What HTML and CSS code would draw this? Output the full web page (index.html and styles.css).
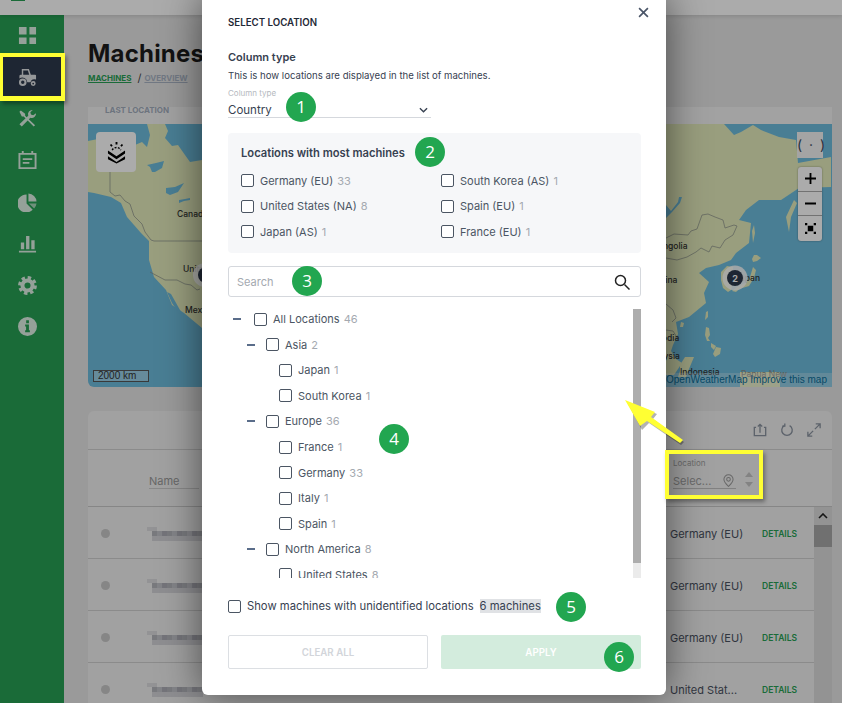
FILE: index.html
```html
<!DOCTYPE html>
<html lang="en">
<head>
<meta charset="utf-8">
<title>Machines</title>
<link rel="stylesheet" href="styles.css">
</head>
<body>
<div class="app">
  <header class="topbar"><span class="logo"></span></header>
  <div class="layout">
    <nav class="sidebar">
      <a class="nav-item"><svg class="nav-icon" viewBox="0 0 20 20"><path d="M1 1h8v8H1zM12 1h7v8h-7zM1 12h8v7H1zM12 12h7v7h-7z"/></svg></a>
      <a class="nav-item active"><svg class="nav-icon" viewBox="0 0 20 20"><path fill-rule="evenodd" d="M4 1h7.500l2 6H18a1 1 0 0 1 1 1v4.200a4 4 0 0 0-5.800 2.800H9.800A5.200 5.200 0 0 0 1.500 11V8.500A1.500 1.500 0 0 1 3 7h1zM5.500 2.500V7h6.300l-1.400-4.500zM5 11a4 4 0 1 1 0 8 4 4 0 0 1 0-8zm0 2.200a1.800 1.800 0 1 0 0 3.600 1.800 1.800 0 0 0 0-3.600zM16 13.800a2.600 2.600 0 1 1 0 5.200 2.600 2.600 0 0 1 0-5.200zm0 1.600a1 1 0 1 0 0 2 1 1 0 0 0 0-2z"/></svg></a>
      <a class="nav-item"><svg class="nav-icon" viewBox="0 0 20 20"><path d="M1.500 3 3 1.500l4.500 3.500v2l10.500 10-1.500 1.500L6 8H4z"/><path d="M19 4.500a4.500 4.500 0 0 1-6 4.700L4 18.500 1.500 16l9.300-9A4.500 4.500 0 0 1 15.500 1L13 3.500l.6 2.400 2.400.6z"/></svg></a>
      <a class="nav-item"><svg class="nav-icon" viewBox="0 0 20 20"><path fill-rule="evenodd" d="M4 0h2v2h8V0h2v2h3.500v17H.5V2H4zM2.500 4v13h15V4z"/><path d="M5 7.500h10v2H5zM5 11.500h7v2H5z"/></svg></a>
      <a class="nav-item"><svg class="nav-icon" viewBox="0 0 20 20"><path d="M9 1.500v9.500l6.500 6.700A9.500 9.500 0 1 1 9 1.500z"/><path d="M11 .5a9 9 0 0 1 8.500 8.500H11z"/><path d="M11.500 11h8a9.400 9.400 0 0 1-2.500 5.300z" opacity=".7"/></svg></a>
      <a class="nav-item"><svg class="nav-icon" viewBox="0 0 20 20"><path d="M3 9h3.500v7H3zM8.500 2H12v14H8.500zM14 6.500h3.500V16H14zM1 17.500h18v2H1z"/></svg></a>
      <a class="nav-item"><svg class="nav-icon" viewBox="0 0 20 20"><circle class="gear-ring" cx="10" cy="10" r="5.300"/><circle class="gear-teeth" cx="10" cy="10" r="8.200"/></svg></a>
      <a class="nav-item"><svg class="nav-icon" viewBox="0 0 20 20"><path fill-rule="evenodd" d="M10 0a10 10 0 1 1 0 20 10 10 0 0 1 0-20zM8.600 3.500v3h2.900v-3zM7.500 8v2h1v4h-1v2h5v-2h-1V8z"/></svg></a>
    </nav>
    <main class="main">
      <h1 class="title">Machines</h1>
      <div class="crumbs"><a class="crumb-current">MACHINES</a><span class="crumb-sep">/</span><a class="crumb-link">OVERVIEW</a></div>
      <section class="map-card">
        <div class="map-head">LAST LOCATION</div>
        <div class="map">
          <svg class="map-svg" viewBox="88 124 744 263">
            <rect class="water" x="88" y="124" width="744" height="263"/>
            <path class="land" d="M88 141l20-4 27 8 7-3 5 5 3-12-3-11h18l3 7-3 7 7 8 6-1 7 10 5 7 12-2V328l-18-15-12-8-6-15-12-13-5-17v-20l2 3-10-10-14-16-6-14-10-6-17-4-6-1z"/>
            <path class="water" d="M147 165l9-2 8-2-2 7-7 4-3 0-2-5zM166 188l9-1 9-4-6 9-8 3-4-2zM179 200l6-1 5-1 0 2-6 1-5 2zM167 292l4 2 9 16 3 5-3 0-8-12z"/>
            <path class="border" d="M110 145v47l5 4 5-1 5 6 5 3 4 12 8 8 3 8 6 8 3 1h50M150 272l15 8 12 0 8 4 6 1 6 5 3-1"/>
            <path class="land" d="M666 124h58l10 11 7-3 12-7 8 5 18 7 17 3 2 23 33-6v30l-32 1-18 12h-22l-13 10-7 10 12 3-2 20-13 10-5 7-12 5-13 3-7 5 10 9-5 11 2 10-17 14-13 5 2 12-5 11-2 6 5 8 6 4-8 12H666z"/>
            <path class="land" d="M721 272l6-6 6 1v15l-2 8-3 2-5-4-2-8zM794 200l3 3-6 14-2 15-3-15zM754 225l1 8-2 10-1-12zM754 255l3 0 4 3-4 3-4 1-1-3zM753 267l3 3-2 8-5 8-10 3-3 3-4-1 5-4 8-4 5-6z"/>
            <path class="land" d="M706 312l2-1 0 6-3 3zM706 327l3 1 1 7-2 3 2 3-3 0-2-6zM711 343l5 3-2 4-3-3zM716 347l5 1-1 6-5 3-2-3zM694 357l-9 0-5 8 0 6-2 6 8 0 3-8zM681 322l3 1-1 4-3 0zM740 372l40 0 0 15-40 0z"/>
            <path class="water" d="M666 205l5 6 7-9 1-5 3 0-2 6-8 9-6 6z"/>
            <path class="border" d="M666 238l8-4 14 1 3-4 6-2 5-14 6-1 7 3 8 3 2 8 9-3 3 1-4 9-8 5-5 8-8-2-3 6-8-4-5 4-9 5-10 3-11-2M666 304l7 6 3 8-4 4M666 330l7 1 5 8"/>
            <text class="map-label" x="177" y="217">Canada</text>
            <text class="map-label" x="183" y="272">United</text>
            <text class="map-label" x="185" y="313">Mexico</text>
            <text class="map-label" x="650" y="249">Mongolia</text>
            <text class="map-label" x="654" y="283">China</text>
            <text class="map-label" x="735" y="281">Japan</text>
            <text class="map-label" x="638" y="341">Cambodia</text>
            <text class="map-label" x="644" y="359">Malaysia</text>
            <text class="map-label" x="680" y="375">Indonesia</text>
            <text class="map-label faint" x="741" y="377">Papua New</text>
            <circle class="marker-halo" cx="205" cy="275" r="12"/>
            <circle class="marker-core" cx="206" cy="275" r="8"/>
            <circle class="marker-halo" cx="735" cy="278" r="12.500"/>
            <circle class="marker-core" cx="735" cy="278" r="8"/>
            <text class="marker-num" x="735" y="281.500">2</text>
          </svg>
          <button class="layers-btn"><svg class="layers-icon" viewBox="0 0 20 24"><path d="M1 10l9 6 9-6v3l-9 6-9-6zM1 16l9 6 9-6v3l-9 4.500L1 19z"/><path class="layers-arc" d="M5.500 9.500A5 5 0 0 1 14.500 9.500"/><path d="M9 1h2v2.500H9zM3 4l1.500-1 1.500 2-1.500 1zM17 4l-1.500-1L14 5l1.500 1z"/></svg></button>
          <div class="locate">( · )</div>
          <div class="zoom-ctl">
            <button class="zoom-btn"><svg class="zoom-icon" viewBox="0 0 12 12"><path d="M5 0h2v5h5v2H7v5H5V7H0V5h5z"/></svg></button>
            <button class="zoom-btn"><svg class="zoom-icon" viewBox="0 0 12 12"><path d="M0 5h12v2H0z"/></svg></button>
            <button class="zoom-btn"><svg class="zoom-icon" viewBox="0 0 12 12"><path d="M3 3h6v6H3zM0 0h2.500v2.500H0zM9.500 0H12v2.500H9.500zM0 9.500h2.500V12H0zM9.500 9.500H12V12H9.500z"/></svg></button>
          </div>
          <div class="scale">2000 km</div>
          <div class="attrib">© OpenWeatherMap Improve this map</div>
        </div>
      </section>
      <section class="table-card">
        <div class="table-tools">
          <svg class="tool" viewBox="0 0 16 16"><path d="M3.500 5H1.500v9.500h13V5h-2M8 11V1.500M5.500 4 8 1.500 10.500 4"/></svg>
          <svg class="tool" viewBox="0 0 16 16"><path d="M5 3a6 6 0 1 0 6 0"/><path d="M5.500 .5V3.500H2.500"/></svg>
          <svg class="tool" viewBox="0 0 16 16"><path d="M9 7l6-6M10 1h5v5M7 9l-6 6M1 10v5h5"/></svg>
        </div>
        <div class="table-head">
          <div class="th-name">Name</div>
          <div class="th-loc">
            <span class="th-loc-label">Location</span>
            <div class="th-loc-field"><span class="th-loc-value">Selec...</span>
              <svg class="pin" viewBox="0 0 12 14"><path d="M6 .7a5 5 0 0 1 5 5c0 3.300-3 5.800-5 7.600-2-1.800-5-4.300-5-7.600a5 5 0 0 1 5-5z"/><circle cx="6" cy="5.700" r="2"/></svg>
            </div>
          </div>
          <div class="sort"><span class="sort-up"></span><span class="sort-down"></span></div>
        </div>
        <div class="tbody">
          <div class="rows">
            <div class="row"><span class="dot"></span><span class="blur"></span><span class="cell-loc">Germany (EU)</span><a class="details">DETAILS</a></div>
            <div class="row"><span class="dot"></span><span class="blur"></span><span class="cell-loc">Germany (EU)</span><a class="details">DETAILS</a></div>
            <div class="row"><span class="dot"></span><span class="blur"></span><span class="cell-loc">Germany (EU)</span><a class="details">DETAILS</a></div>
            <div class="row"><span class="dot"></span><span class="blur"></span><span class="cell-loc">United Stat...</span><a class="details">DETAILS</a></div>
          </div>
          <div class="vscroll"><svg class="vscroll-up" viewBox="0 0 10 6"><path d="M1 5l4-4 4 4"/></svg><span class="vscroll-thumb"></span></div>
        </div>
      </section>
    </main>
  </div>
  <div class="overlay"></div>

  <div class="modal">
    <button class="close"><svg viewBox="0 0 10 10"><path d="M1 1l8 8M9 1l-8 8"/></svg></button>
    <h2 class="modal-title">SELECT LOCATION</h2>
    <h3 class="section-title">Column type</h3>
    <p class="section-desc">This is how locations are displayed in the list of machines.</p>
    <div class="select">
      <span class="select-label">Column type</span>
      <div class="select-field"><span>Country</span><svg class="chev" viewBox="0 0 10 6"><path d="M1 1l4 4 4-4"/></svg></div>
    </div>
    <div class="top-box">
      <div class="top-title">Locations with most machines</div>
      <div class="top-grid">
        <label class="chk"><span class="box"></span>Germany (EU) <em>33</em></label>
        <label class="chk"><span class="box"></span>South Korea (AS) <em>1</em></label>
        <label class="chk"><span class="box"></span>United States (NA) <em>8</em></label>
        <label class="chk"><span class="box"></span>Spain (EU) <em>1</em></label>
        <label class="chk"><span class="box"></span>Japan (AS) <em>1</em></label>
        <label class="chk"><span class="box"></span>France (EU) <em>1</em></label>
      </div>
    </div>
    <div class="search"><span>Search</span><svg class="search-icon" viewBox="0 0 16 16"><circle cx="6.500" cy="6.500" r="5"/><path d="M10.500 10.500l5 5"/></svg></div>
    <div class="tree-wrap">
      <div class="tree">
        <div class="node l0"><i class="minus"></i><span class="box"></span>All Locations <em>46</em></div>
        <div class="node l1"><i class="minus"></i><span class="box"></span>Asia <em>2</em></div>
        <div class="node l2"><span class="box"></span>Japan <em>1</em></div>
        <div class="node l2"><span class="box"></span>South Korea <em>1</em></div>
        <div class="node l1"><i class="minus"></i><span class="box"></span>Europe <em>36</em></div>
        <div class="node l2"><span class="box"></span>France <em>1</em></div>
        <div class="node l2"><span class="box"></span>Germany <em>33</em></div>
        <div class="node l2"><span class="box"></span>Italy <em>1</em></div>
        <div class="node l2"><span class="box"></span>Spain <em>1</em></div>
        <div class="node l1"><i class="minus"></i><span class="box"></span>North America <em>8</em></div>
        <div class="node l2"><span class="box"></span>United States <em>8</em></div>
      </div>
      <div class="tree-scroll"><span class="tree-thumb"></span></div>
    </div>
    <div class="unident"><span class="box"></span>Show machines with unidentified locations<span class="chip">6 machines</span></div>
    <div class="actions">
      <button class="btn btn-clear">CLEAR ALL</button>
      <button class="btn btn-apply">APPLY</button>
    </div>
  </div>

  <div class="hl hl-nav"></div>
  <div class="hl hl-loc"></div>
  <svg class="arrow" viewBox="0 0 60 48"><path class="arrow-shadow" d="M2 2l30 12-4 5 31 23-3 3-32-22-7 7z"/><path class="arrow-fill" d="M0 0l30 12-4 5 32 23-3 3-33-22-7 5z"/></svg>
  <span class="badge b1">1</span>
  <span class="badge b2">2</span>
  <span class="badge b3">3</span>
  <span class="badge b4">4</span>
  <span class="badge b5">5</span>
  <span class="badge b6">6</span>
</div>
</body>
</html>
```
FILE: styles.css
```css
* { box-sizing: border-box; }
html, body { margin: 0; padding: 0; }
body { font-family: Inter, "Liberation Sans", sans-serif; color: #1f2937; background: #e6e6e6; }
button { font-family: inherit; border: 0; padding: 0; background: none; }
em { font-style: normal; color: #a4a9b0; }
.app { position: relative; width: 842px; height: 703px; overflow: hidden; }

.topbar { height: 15px; background: #fff; position: relative; box-shadow: 0 1px 4px rgba(0,0,0,.15); z-index: 1; }
.logo { display: block; position: absolute; left: 11px; top: -13px; width: 14px; height: 14px; background: #27a054; }
.layout { display: flex; height: 688px; }
.sidebar { width: 64px; flex: none; background: #27a054; display: flex; flex-direction: column; }
.nav-item { height: 41.6px; flex: none; display: flex; align-items: center; padding-left: 18px; }
.nav-item.active { background: #2e3a4c; }
.nav-icon { width: 19px; height: 19px; fill: #fff; opacity: .85; }
.gear-ring { fill: none; stroke: #fff; stroke-width: 4.200; }
.gear-teeth { fill: none; stroke: #fff; stroke-width: 3.400; stroke-dasharray: 3.600 2.830; }

.main { flex: 1; padding: 24px 10px 0 24px; min-width: 0; }
.title { margin: 0; font-size: 24px; line-height: 30px; font-weight: 700; color: #1c1c1c; letter-spacing: .2px; }
.crumbs { display: flex; align-items: center; height: 18px; margin-top: 0; font-size: 8px; font-weight: 700; }
.crumb-current { color: #27a054; text-decoration: underline; }
.crumb-sep { margin: 0 3px 0 6px; font-size: 11px; font-weight: 400; color: #444; }
.crumb-link { color: #a9b4c4; text-decoration: underline; }

.map-card { margin-top: 20px; }
.map-head { height: 17px; background: #f2f2f2; padding-left: 17px; font-size: 8px; line-height: 7px; font-weight: 700; color: #a3adbd; }
.map { position: relative; height: 263px; border-radius: 0 0 0 6px; overflow: hidden; }
.map-svg { display: block; width: 744px; height: 263px; }
.water { fill: #6ebcdd; }
.land { fill: #e4ecbc; }
.border { fill: none; stroke: #8a8f8a; stroke-width: .7; }
.marker-halo { fill: #fff; fill-opacity: .85; }
.marker-core { fill: #2e3a4c; }
.marker-num { fill: #fff; font-size: 9px; font-weight: 700; text-anchor: middle; }
.map-label { fill: #333; font-size: 8.500px; font-weight: 500; }
.map-label.faint { fill: #8a8f8a; }
.layers-btn { position: absolute; left: 8px; top: 8px; width: 40px; height: 40px; background: #fff; border-radius: 4px; display: flex; align-items: center; justify-content: center; }
.layers-icon { width: 19px; height: 23px; fill: #000; }
.layers-arc { fill: none; stroke: #000; stroke-width: 1.500; stroke-dasharray: 2 1.500; }
.locate { position: absolute; left: 709px; top: 8px; width: 26px; height: 26px; background: #f5f5f5; font-size: 14px; line-height: 25px; letter-spacing: 1.500px; text-align: center; color: #3c4c5c; white-space: nowrap; }
.zoom-ctl { position: absolute; left: 710px; top: 43px; width: 24px; background: #fff; border-radius: 3px; display: flex; flex-direction: column; box-shadow: 0 0 2px rgba(0,0,0,.4); }
.zoom-btn { height: 24.700px; display: flex; align-items: center; justify-content: center; border-bottom: 1px solid #aaa; }
.zoom-btn:last-child { border-bottom: 0; }
.zoom-icon { width: 11px; height: 11px; fill: #000; }
.scale { position: absolute; left: 5px; bottom: 5px; width: 56px; height: 12px; border: 1px solid #555; border-top-width: 1px; background: rgba(255,255,255,.3); font-size: 10px; line-height: 10px; padding-left: 4px; color: #333; font-family: "Liberation Sans", sans-serif; }
.attrib { position: absolute; right: 0; bottom: 0; height: 14px; padding: 0 5px 0 8px; background: rgba(255,255,255,.25); font-size: 10px; line-height: 14px; color: #0a6d9a; font-family: "Liberation Sans", sans-serif; white-space: nowrap; }

.table-card { margin-top: 24px; background: #f0f0f0; border-radius: 6px 6px 0 0; height: 292px; }
.table-tools { height: 39px; border-bottom: 1px solid #d0d0d0; display: flex; justify-content: flex-end; align-items: center; gap: 13px; padding-right: 11px; }
.tool { width: 14px; height: 14px; fill: none; stroke: #8a93a0; stroke-width: 1.500; }
.table-head { height: 57px; border-bottom: 1px solid #c8c8c8; display: flex; align-items: flex-end; padding: 0 0 17px 61px; }
.th-name { width: 50px; font-size: 11px; line-height: 14px; color: #9a9a9a; border-bottom: 1px solid #ccc; }
.th-loc { margin-left: 474px; width: 63px; display: flex; flex-direction: column; }
.th-loc-label { font-size: 8px; line-height: 10px; color: #a0a0a0; }
.th-loc-field { height: 21px; display: flex; align-items: flex-end; justify-content: space-between; border-bottom: 1px solid #c0c0c0; font-size: 11px; line-height: 14px; color: #a0a0a0; }
.pin { width: 11px; height: 13px; fill: none; stroke: #9a9a9a; stroke-width: 1.100; margin: 0 2px 1px 0; }
.sort { margin-left: 9px; display: flex; flex-direction: column; gap: 5px; padding-bottom: 2px; }
.sort-up { width: 0; height: 0; border: 4px solid transparent; border-top: 0; border-bottom: 5px solid #c4c4c4; }
.sort-down { width: 0; height: 0; border: 4px solid transparent; border-bottom: 0; border-top: 5px solid #c4c4c4; }
.tbody { display: flex; height: 196px; }
.rows { flex: 1; min-width: 0; }
.row { height: 52px; display: flex; align-items: center; padding: 2px 0 0 13px; border-bottom: 1px solid #d0d0d0; }
.dot { width: 9px; height: 9px; border-radius: 50%; background: #c8c8c8; flex: none; }
.blur { width: 56px; height: 14px; margin-left: 37px; flex: none; background:
  repeating-linear-gradient(90deg, #b5b6bd 0 5px, #c4c5cb 5px 10px, #adaeb6 10px 15px) 5px 4px / 51px 5px no-repeat,
  linear-gradient(#dcdcde, #dcdcde) 0 0 / 10px 4px no-repeat,
  linear-gradient(#d4d4d8, #d4d4d8) 5px 9px / 51px 5px no-repeat; }
.cell-loc { margin-left: 467px; width: 92px; flex: none; font-size: 11px; color: #4a5160; white-space: nowrap; }
.details { font-size: 8.500px; font-weight: 600; color: #27a054; }
.vscroll { width: 18px; flex: none; background: #dcdcdc; display: flex; flex-direction: column; align-items: center; padding-top: 6px; }
.vscroll-up { width: 10px; height: 6px; fill: none; stroke: #222; stroke-width: 1.600; }
.vscroll-thumb { width: 18px; height: 22px; margin-top: 6px; background: #a8a8a8; }

.overlay { position: absolute; inset: 0; background: rgba(0,0,0,.33); z-index: 2; }

.modal { position: absolute; z-index: 3; left: 202px; top: -5px; width: 464px; height: 700px; background: #fff; border-radius: 6px; box-shadow: 0 0 40px rgba(0,0,0,.55); padding: 22px 25px 0 26px; display: flex; flex-direction: column; }
.close { position: absolute; right: 17px; top: 12px; width: 11px; height: 11px; }
.close svg { display: block; width: 11px; height: 11px; fill: none; stroke: #4a5568; stroke-width: 1.500; }
.modal-title { margin: 0; font-size: 9.700px; line-height: 12px; font-weight: 600; color: #1f2937; }
.section-title { margin: 21px 0 0; font-size: 11px; line-height: 14px; font-weight: 600; color: #374151; }
.section-desc { margin: 5px 0 0; font-size: 9.600px; line-height: 14px; color: #374151; }
.select { width: 203px; margin-top: 5px; }
.select-label { display: block; font-size: 8px; line-height: 10px; color: #b5b9c0; }
.select-field { height: 20px; display: flex; align-items: flex-end; justify-content: space-between; border-bottom: 1px solid #d5d8dd; font-size: 11.500px; line-height: 14px; color: #374151; padding-right: 3px; }
.chev { width: 9px; height: 6px; fill: none; stroke: #374151; stroke-width: 1.500; margin-bottom: 4px; }
.top-box { margin-top: 15px; height: 120px; background: #f6f7f9; border-radius: 4px; padding: 13px; }
.top-title { font-size: 11.200px; line-height: 14px; font-weight: 600; color: #374151; }
.top-grid { margin-top: 8px; display: grid; grid-template-columns: 200px 1fr; grid-auto-rows: 25.500px; }
.chk { display: flex; align-items: center; font-size: 11px; color: #4b5563; white-space: pre; }
.box { width: 13px; height: 13px; flex: none; border: 1px solid #4b5563; border-radius: 2px; background: #fff; margin-right: 6px; }
.chk em { margin-left: 1px; }
.search { margin-top: 13px; height: 31px; border: 1px solid #d5d8dd; border-radius: 3px; display: flex; align-items: center; justify-content: space-between; padding: 0 10px 0 8px; font-size: 11px; color: #a4a9b0; }
.search-icon { width: 16px; height: 16px; fill: none; stroke: #222; stroke-width: 1.500; }
.tree-wrap { margin-top: 12px; height: 269px; display: flex; overflow: hidden; }
.tree { flex: 1; min-width: 0; margin-top: -2.500px; }
.node { height: 25.550px; display: flex; align-items: center; font-size: 11px; color: #4b5563; white-space: pre; }
.node em { margin-left: 1px; }
.node.l0 { padding-left: 5px; }
.node.l1 { padding-left: 19px; }
.node.l2 { padding-left: 51px; }
.minus { display: block; width: 8px; height: 2px; background: #5a6d8a; margin-right: 13px; flex: none; }
.node.l1 .minus { margin-right: 11px; }
.tree-scroll { width: 8px; flex: none; background: #ebebeb; }
.tree-thumb { display: block; height: 254px; background: #adadad; }
.unident { margin-top: 21px; display: flex; align-items: center; height: 14px; font-size: 11.250px; color: #374151; white-space: nowrap; }
.chip { margin-left: 6px; height: 14px; line-height: 14px; background: #e0e2e5; }
.actions { margin-top: 22px; display: grid; grid-template-columns: 200px 200px; column-gap: 13px; }
.btn { height: 34px; font-size: 9.700px; font-weight: 600; border-radius: 2px; }
.btn-clear { background: #fff; border: 1px solid #dcdfe3; color: #d2d5da; }
.btn-apply { background: #d3ecdd; color: #fff; }

.hl { position: absolute; z-index: 4; border: 4px solid #ffff33; box-shadow: 2px 3px 4px rgba(0,0,0,.35); }
.hl-nav { left: 0; top: 53px; width: 65px; height: 48px; border-width: 4px 4px 5px 3px; }
.hl-loc { left: 665px; top: 450px; width: 98px; height: 49px; }
.arrow { position: absolute; z-index: 4; left: 625px; top: 400px; width: 60px; height: 48px; }
.arrow-fill { fill: #ffff33; }
.arrow-shadow { fill: rgba(0,0,0,.3); }

.badge { position: absolute; z-index: 5; width: 30px; height: 30px; border-radius: 50%; background: #22a650; color: #fff; font-size: 17px; line-height: 30px; text-align: center; font-family: "Open Sans", sans-serif; }
.b1 { left: 286px; top: 92px; }
.b2 { left: 415px; top: 137px; }
.b3 { left: 292px; top: 266px; }
.b4 { left: 379px; top: 424px; }
.b5 { left: 556px; top: 592px; }
.b6 { left: 604px; top: 642px; }
```
